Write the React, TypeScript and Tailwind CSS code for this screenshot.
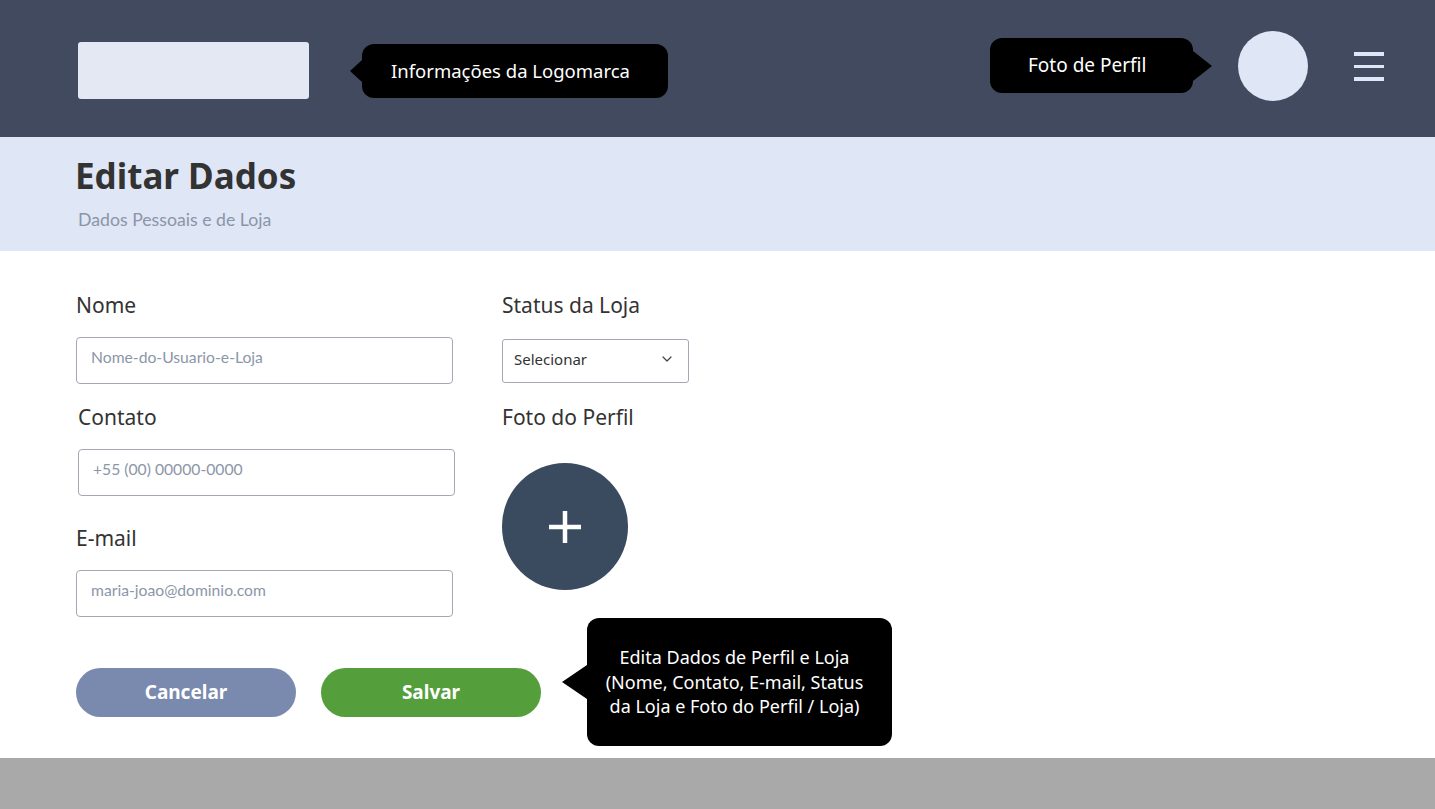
import { ChevronDown } from "lucide-react";

const SANS = "font-['Noto_Sans',sans-serif]";
const LATO = "font-['Lato',sans-serif]";

function Field({
  label,
  placeholder,
  shift = false,
  labelTop,
}: {
  label: string;
  placeholder: string;
  shift?: boolean;
  labelTop: string;
}) {
  return (
    <div className={`flex flex-col ${labelTop} ${shift ? "ml-[2px]" : ""}`}>
      <label className={`${SANS} text-[21px] leading-[28px] text-[#333333]`}>
        {label}
      </label>
      <input
        type="text"
        placeholder={placeholder}
        className={`${LATO} mt-[18px] h-[47px] w-[377px] rounded-[4px] border border-[#a3a8b2] bg-white px-[14px] pb-[7px] text-[15.7px] text-[#333333] outline-none placeholder:text-[#8c96a8]`}
      />
    </div>
  );
}

export default function App() {
  return (
    <div className={`${SANS} flex min-h-screen w-full flex-col bg-white`}>
      {/* Header */}
      <header className="flex h-[137px] items-start bg-[#414a5f] pl-[78px] pr-[51px]">
        <div className="mt-[42px] h-[57px] w-[231px] rounded-[3px] bg-[#e4e8f3]" />
        <div className="ml-[41px] mt-[44px] flex items-center">
          <div className="h-0 w-0 border-y-[11px] border-r-[12px] border-y-transparent border-r-black" />
          <div className="flex h-[54px] w-[306px] items-center rounded-xl bg-black pl-[29px] text-[18.5px] text-white">
            Informações da Logomarca
          </div>
        </div>

        <div className="ml-auto mt-[38px] flex items-center">
          <div className="flex h-[55px] w-[203px] items-center rounded-xl bg-black pl-[38px] text-[19px] text-white">
            Foto de Perfil
          </div>
          <div className="h-0 w-0 border-y-[15px] border-l-[19px] border-y-transparent border-l-black" />
        </div>
        <div className="ml-[26px] mt-[31px] h-[70px] w-[70px] rounded-full bg-[#dfe6f6]" />
        <div className="ml-[46px] mt-[52px] flex flex-col gap-[9px]">
          <span className="h-[3.5px] w-[30px] bg-[#dfe6f6]" />
          <span className="h-[3.5px] w-[30px] bg-[#dfe6f6]" />
          <span className="h-[3.5px] w-[30px] bg-[#dfe6f6]" />
        </div>
      </header>

      {/* Title band */}
      <section className="flex h-[114px] flex-col bg-[#dfe6f6] pl-[75px] pt-[19px]">
        <h1 className="text-[35px] font-bold leading-[40px] text-[#333333]">
          Editar Dados
        </h1>
        <p className={`${LATO} ml-[3px] mt-[12px] text-[17.7px] leading-[24px] text-[#8b95a7]`}>
          Dados Pessoais e de Loja
        </p>
      </section>

      {/* Form */}
      <main className="flex h-[507px] flex-col pl-[76px] pt-[40px]">
        <div className="flex">
          <div className="flex w-[426px] flex-col">
            <Field label="Nome" placeholder="Nome-do-Usuario-e-Loja" labelTop="" />
            <Field
              label="Contato"
              placeholder="+55 (00) 00000-0000"
              shift
              labelTop="mt-[19px]"
            />
            <Field label="E-mail" placeholder="maria-joao@dominio.com" labelTop="mt-[28px]" />
          </div>

          <div className="flex flex-col">
            <label className="text-[21px] leading-[28px] text-[#333333]">
              Status da Loja
            </label>
            <div className="mt-[20px] flex h-[44px] w-[187px] items-center justify-between rounded-[3px] border border-[#a3a8b2] pb-[4px] pl-[11px] pr-[13px]">
              <span className="text-[15px] text-[#333333]">Selecionar</span>
              <ChevronDown size={16} strokeWidth={1.8} color="#444444" />
            </div>
            <label className="mt-[20px] text-[21px] leading-[28px] text-[#333333]">
              Foto do Perfil
            </label>
            <button
              type="button"
              className="mt-[32px] flex h-[127px] w-[126px] items-center justify-center rounded-full bg-[#3a4a5f]"
            >
              <svg width="32" height="32" viewBox="0 0 32 32">
                <path d="M16 0v32M0 16h32" stroke="#ffffff" strokeWidth="4.5" />
              </svg>
            </button>
          </div>
        </div>

        <div className="mt-[1px] flex items-start">
          <button
            type="button"
            className="mt-[50px] h-[49px] w-[220px] rounded-full bg-[#7a8aae] text-[19px] font-bold text-white"
          >
            Cancelar
          </button>
          <button
            type="button"
            className="ml-[25px] mt-[50px] h-[49px] w-[220px] rounded-full bg-[#559e3c] text-[19px] font-bold text-white"
          >
            Salvar
          </button>
          <div className="ml-[21px] flex items-center">
            <div className="h-0 w-0 border-y-[17px] border-r-[25px] border-y-transparent border-r-black" />
            <div className="flex h-[128px] w-[305px] items-center justify-center rounded-xl bg-black pr-[10px] text-center text-[18px] leading-[24.5px] text-white">
              Edita Dados de Perfil e Loja
              <br />
              (Nome, Contato, E-mail, Status
              <br />
              da Loja e Foto do Perfil / Loja)
            </div>
          </div>
        </div>
      </main>

      <footer className="h-[51px] bg-[#a9a9a9]" />
    </div>
  );
}
